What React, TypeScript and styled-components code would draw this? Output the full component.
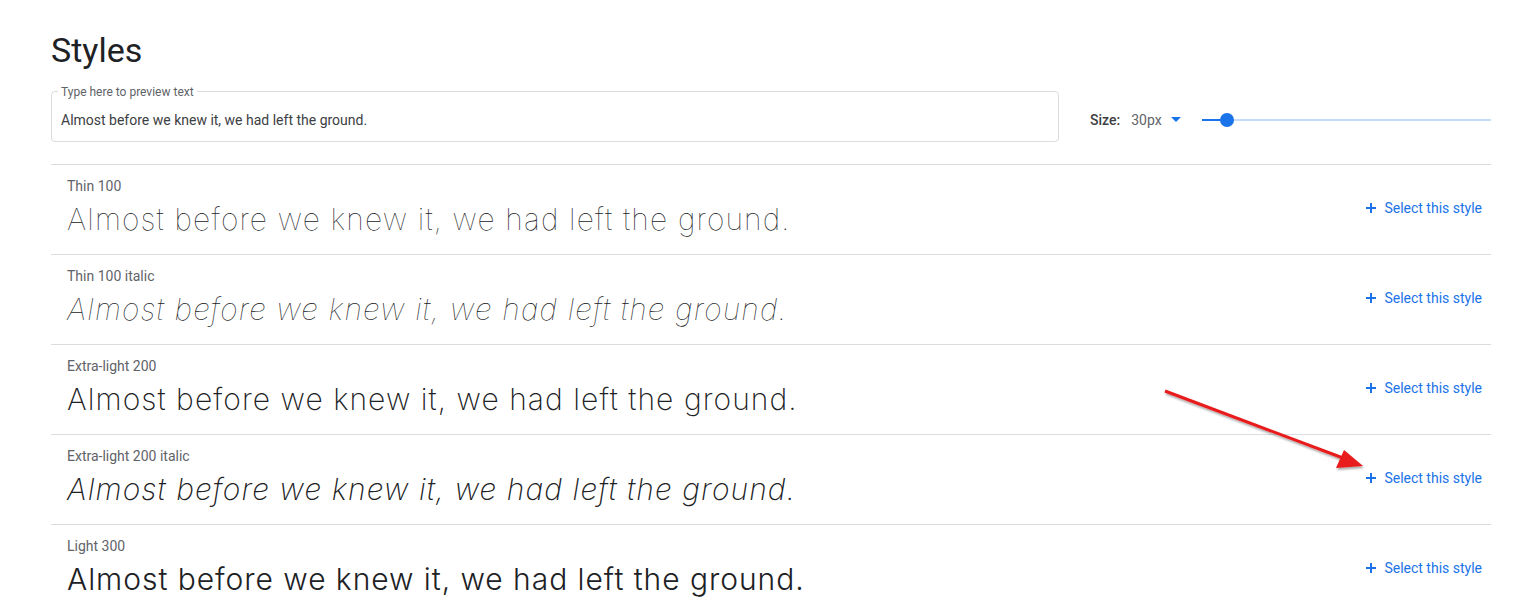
import * as React from 'react';
import styled, { createGlobalStyle } from 'styled-components';

const GlobalStyle = createGlobalStyle`
  html, body {
    margin: 0;
    padding: 0;
    background: #ffffff;
    font-family: Roboto, 'Liberation Sans', Arial, sans-serif;
    color: #202124;
  }
`;

const PREVIEW = 'Almost before we knew it, we had left the ground.';

interface StyleDef {
  name: string;
  weight: number;
  italic?: boolean;
}

const STYLES: StyleDef[] = [
  { name: 'Thin 100', weight: 100 },
  { name: 'Thin 100 italic', weight: 100, italic: true },
  { name: 'Extra-light 200', weight: 200 },
  { name: 'Extra-light 200 italic', weight: 200, italic: true },
  { name: 'Light 300', weight: 300 },
];

// Inter stands in for Montserrat, which is wider; spacing makes up the width
const spacingFor = (weight: number) => (weight === 100 ? 1.15 : weight === 200 ? 1.05 : 0.95);

const Page = styled.div`
  position: relative;
  padding: 28px 33px 0 51px;
  height: 612px;
  box-sizing: border-box;
  overflow: hidden;
`;

const Title = styled.h1`
  margin: 0 0 19px;
  font-size: 34px;
  font-weight: 400;
  line-height: 44px;
  color: #202124;
`;

const Toolbar = styled.div`
  display: flex;
  align-items: center;
  padding-bottom: 22px;
  border-bottom: 1px solid #dadce0;
`;

const Field = styled.div`
  flex: 0 0 1008px;
  box-sizing: border-box;
  height: 51px;
  padding: 0 9px;
  border: 1px solid #dadce0;
  border-radius: 4px;
  display: flex;
  align-items: center;
  position: relative;
`;

const FieldLabel = styled.span`
  position: absolute;
  top: -6px;
  left: 6px;
  padding: 0 3px;
  background: #ffffff;
  font-size: 12px;
  line-height: 13px;
  color: #5f6368;
`;

const FieldText = styled.div`
  font-size: 14px;
  color: #3c4043;
  margin-top: 6px;
`;

const SizeControl = styled.div`
  flex: 1;
  display: flex;
  align-items: center;
  margin-left: 31px;
  font-size: 14px;
  margin-top: 6px;
`;

const SizeLabel = styled.span`
  color: #3c4043;
  font-weight: 500;
  margin-right: 11px;
`;

const SizeValue = styled.span`
  color: #5f6368;
  display: flex;
  align-items: center;
  gap: 9px;
`;

const Caret = styled.span`
  width: 0;
  height: 0;
  border-left: 5px solid transparent;
  border-right: 5px solid transparent;
  border-top: 5px solid #1a73e8;
`;

const Slider = styled.div`
  flex: 1;
  margin-left: 21px;
  height: 16px;
  display: flex;
  align-items: center;
`;

const Track = styled.div<{ $active?: boolean }>`
  height: 2px;
  background: ${p => (p.$active ? '#1a73e8' : '#c6dafc')};
  flex: ${p => (p.$active ? '0 0 25px' : '1')};
`;

const Thumb = styled.div`
  width: 14px;
  height: 14px;
  border-radius: 50%;
  background: #1a73e8;
  margin: 0 -7px;
  z-index: 1;
`;

const Row = styled.div`
  display: flex;
  align-items: center;
  padding: 11px 9px 12px 16px;
  border-bottom: 1px solid #dadce0;
  height: 66px;
`;

const RowBody = styled.div`
  flex: 1;
  min-width: 0;
`;

const StyleName = styled.div`
  font-size: 14px;
  line-height: 20px;
  color: #5f6368;
`;

const Preview = styled.div<{ $weight: number; $italic?: boolean }>`
  font-family: Inter, 'Noto Sans', sans-serif;
  font-size: 30px;
  line-height: 46px;
  white-space: nowrap;
  color: #202124;
  font-weight: ${p => p.$weight};
  font-style: ${p => (p.$italic ? 'italic' : 'normal')};
  letter-spacing: ${p => spacingFor(p.$weight)}px;
`;

const SelectButton = styled.button`
  display: flex;
  align-items: center;
  gap: 7px;
  border: none;
  background: none;
  padding: 0;
  margin-bottom: 3px;
  font-family: Roboto, sans-serif;
  font-size: 14px;
  font-weight: 400;
  color: #1a73e8;
  cursor: pointer;
`;

const Annotation = styled.svg`
  position: absolute;
  left: 0;
  top: 0;
  pointer-events: none;
`;

const PlusIcon = () => (
  <svg width="12" height="12" viewBox="0 0 12 12">
    <path d="M6 1v10M1 6h10" stroke="#1a73e8" strokeWidth="2" />
  </svg>
);

export default function App() {
  return (
    <Page>
      <GlobalStyle />
      <Title>Styles</Title>
      <Toolbar>
        <Field>
          <FieldLabel>Type here to preview text</FieldLabel>
          <FieldText>{PREVIEW}</FieldText>
        </Field>
        <SizeControl>
          <SizeLabel>Size:</SizeLabel>
          <SizeValue>
            30px <Caret />
          </SizeValue>
          <Slider>
            <Track $active />
            <Thumb />
            <Track />
          </Slider>
        </SizeControl>
      </Toolbar>
      {STYLES.map(s => (
        <Row key={s.name}>
          <RowBody>
            <StyleName>{s.name}</StyleName>
            <Preview $weight={s.weight} $italic={s.italic}>
              {PREVIEW}
            </Preview>
          </RowBody>
          <SelectButton>
            <PlusIcon />
            Select this style
          </SelectButton>
        </Row>
      ))}
      <Annotation width="1524" height="612">
        <defs>
          <filter id="shadow" x="-10%" y="-10%" width="120%" height="120%">
            <feDropShadow dx="1" dy="2" stdDeviation="1.2" floodColor="#000" floodOpacity="0.35" />
          </filter>
        </defs>
        <g filter="url(#shadow)">
          <line x1="1165" y1="391" x2="1343" y2="458" stroke="#e81a1a" strokeWidth="3" />
          <polygon points="1363,466 1336,468 1344,450" fill="#e81a1a" />
        </g>
      </Annotation>
    </Page>
  );
}
